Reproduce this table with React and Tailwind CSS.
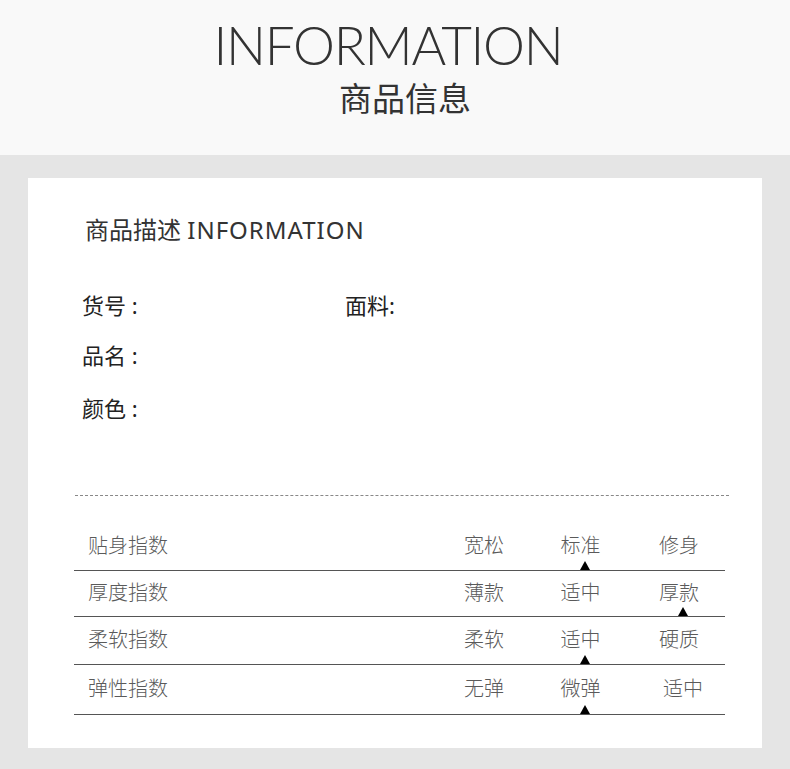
import React from "react";

const FONT = {
  fontFamily: '"Noto Sans", "Noto Sans CJK SC", sans-serif',
};

// selected: index of the option the marker sits under
const rows = [
  { label: "贴身指数", options: ["宽松", "标准", "修身"], selected: 1, h: "h-[47px]" },
  { label: "厚度指数", options: ["薄款", "适中", "厚款"], selected: 2, h: "h-[46px]" },
  { label: "柔软指数", options: ["柔软", "适中", "硬质"], selected: 1, h: "h-[48px]" },
  { label: "弹性指数", options: ["无弹", "微弹", "适中"], selected: 1, h: "h-[50px]", lastShift: true },
];

const cellWidths = ["w-[88px]", "w-[105px]", "w-[92px]"];

const Marker = () => (
  <span className="absolute bottom-0 left-1/2 ml-[-1px] h-0 w-0 border-l-[5px] border-r-[5px] border-b-[9px] border-l-transparent border-r-transparent border-b-black" />
);

const IndexRow = ({ row }) => (
  <div className={`flex items-stretch border-b border-[#555] ${row.h}`}>
    <div className="flex flex-1 items-center pl-[14px] pb-[2px] text-[20px] font-light text-[#5a5a5a]">
      {row.label}
    </div>
    {row.options.map((opt, i) => (
      <div
        key={opt + i}
        className={`relative flex items-center justify-center pb-[2px] text-[20px] font-light text-[#5a5a5a] ${cellWidths[i]} ${
          row.lastShift && i === 2 ? "pl-[8px]" : ""
        }`}
      >
        {opt}
        {row.selected === i && <Marker />}
      </div>
    ))}
  </div>
);

const App = () => {
  return (
    <div className="w-[790px] h-[769px] bg-[#e5e5e5]" style={FONT}>
      {/* Header */}
      <div className="flex h-[155px] flex-col items-center bg-[#f9f9f9]">
        <div
          className="mt-[13px] pr-[14px] text-[53px] leading-[64px] font-light tracking-[-1.3px] text-[#333]"
          style={{ fontFamily: '"Lato", sans-serif' }}
        >
          INFORMATION
        </div>
        <div className="mt-[2px] pl-[20px] text-[33px] leading-[40px] text-[#333]">
          商品信息
        </div>
      </div>

      {/* Card */}
      <div className="mx-[28px] mt-[23px] h-[570px] bg-white">
        <div className="pl-[57px] pt-[35px] text-[24px] leading-[34px] text-[#333]">
          商品描述 <span className="tracking-[1px]">INFORMATION</span>
        </div>

        <div className="mt-[33px] pl-[54px] text-[22px] text-[#222]">
          <div className="flex h-[50px] items-center">
            <span className="w-[263px]">货号 :</span>
            <span>面料:</span>
          </div>
          <div className="flex h-[50px] items-center">品名 :</div>
          <div className="flex h-[56px] items-center">颜色 :</div>
        </div>

        <div className="ml-[47px] mr-[33px] mt-[59px] border-t border-dashed border-[#888]" />

        <div className="ml-[46px] mr-[37px] mt-[28px]">
          {rows.map((row) => (
            <IndexRow key={row.label} row={row} />
          ))}
        </div>
      </div>
    </div>
  );
};

export default App;
